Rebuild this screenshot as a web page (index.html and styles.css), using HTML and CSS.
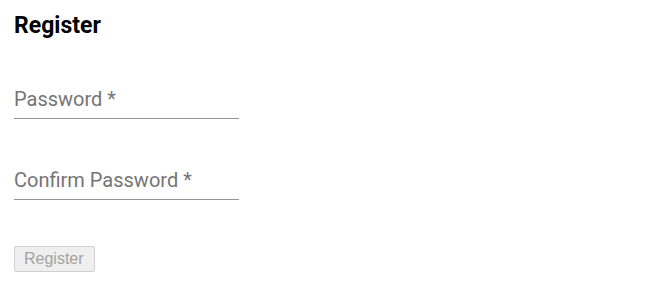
FILE: index.html
```html
<!DOCTYPE html>
<html lang="en">
<head>
    <meta charset="UTF-8">
    <title>Register</title>
    <link rel="stylesheet" href="styles.css">
</head>
<body>
    <div class="register-container">
        <h2>Register</h2>
        <form class="register-form">
            <div class="form-field">
                <label for="password">Password *</label>
                <input type="password" id="password" name="password">
            </div>
            <div class="form-field">
                <label for="confirm">Confirm Password *</label>
                <input type="password" id="confirm" name="confirm">
            </div>
            <button type="submit" class="submit-btn" disabled>Register</button>
        </form>
    </div>
</body>
</html>
```

FILE: styles.css
```css
body {
    margin: 0;
    padding: 12px 14px;
    font-family: Roboto, "Liberation Sans", sans-serif;
    background-color: white;
}
.register-container h2 {
    margin: 0;
    font-size: 23px;
    line-height: 28px;
    font-weight: 700;
    color: #000;
}
.register-form {
    display: flex;
    flex-direction: column;
    align-items: flex-start;
}
.form-field {
    position: relative;
    width: 225px;
    height: 31px;
    margin-top: 47px;
    border-bottom: 1px solid #949494;
}
.form-field + .form-field {
    margin-top: 49px;
}
.form-field label {
    position: absolute;
    left: 0;
    bottom: 7px;
    font-size: 20px;
    line-height: 24px;
    color: #757575;
}
.form-field input {
    width: 100%;
    height: 100%;
    border: none;
    outline: none;
    padding: 0;
    background: transparent;
}
.submit-btn {
    margin-top: 46px;
    font-family: "Liberation Sans", Arial, sans-serif;
    font-size: 16px;
    line-height: 18px;
    padding: 3px 10px 3px 9px;
    color: #a3a3a3;
    background-color: #efefef;
    border: 1px solid #d0d0d0;
    border-radius: 2px;
}
```
